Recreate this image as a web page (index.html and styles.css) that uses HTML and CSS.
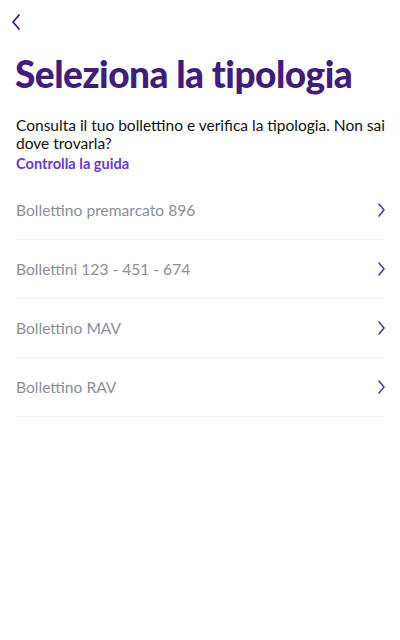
FILE: index.html
```html
<!DOCTYPE html>
<html lang="it">
<head>
  <meta charset="UTF-8" />
  <meta name="viewport" content="width=device-width, initial-scale=1.0" />
  <title>Seleziona la tipologia</title>
  <link rel="stylesheet" href="styles.css">
</head>
<body>
  <header class="topbar">
    <a class="back" href="#">
      <svg width="12" height="18" viewBox="0 0 12 18"><path d="M9 2 L3 9 L9 16" fill="none" stroke="#3d1a78" stroke-width="1.8" stroke-linecap="round" stroke-linejoin="round"/></svg>
    </a>
  </header>

  <main class="content">
    <h1 class="title">Seleziona la tipologia</h1>
    <p class="intro">Consulta il tuo bollettino e verifica la tipologia. Non sai dove trovarla?</p>
    <a class="guide" href="#">Controlla la guida</a>

    <ul class="types">
      <li class="type">
        <span>Bollettino premarcato 896</span>
        <svg class="chev" width="10" height="16" viewBox="0 0 10 16"><path d="M3 2 L8 8 L3 14" fill="none" stroke="#4b3b8f" stroke-width="1.5" stroke-linecap="round" stroke-linejoin="round"/></svg>
      </li>
      <li class="type">
        <span>Bollettini 123 - 451 - 674</span>
        <svg class="chev" width="10" height="16" viewBox="0 0 10 16"><path d="M3 2 L8 8 L3 14" fill="none" stroke="#4b3b8f" stroke-width="1.5" stroke-linecap="round" stroke-linejoin="round"/></svg>
      </li>
      <li class="type">
        <span>Bollettino MAV</span>
        <svg class="chev" width="10" height="16" viewBox="0 0 10 16"><path d="M3 2 L8 8 L3 14" fill="none" stroke="#4b3b8f" stroke-width="1.5" stroke-linecap="round" stroke-linejoin="round"/></svg>
      </li>
      <li class="type">
        <span>Bollettino RAV</span>
        <svg class="chev" width="10" height="16" viewBox="0 0 10 16"><path d="M3 2 L8 8 L3 14" fill="none" stroke="#4b3b8f" stroke-width="1.5" stroke-linecap="round" stroke-linejoin="round"/></svg>
      </li>
    </ul>
  </main>
</body>
</html>
```

FILE: styles.css
```css
body, html {
  margin: 0;
  padding: 0;
  background: #fff;
  font-family: Lato, 'Noto Sans', sans-serif;
  color: #111;
}

.topbar {
  height: 44px;
  padding: 0 10px;
  display: flex;
  align-items: center;
}

.back {
  display: flex;
}

.content {
  padding: 0 16px;
}

.title {
  margin: 8px 0 0 -1px;
  font-size: 37px;
  font-weight: 900;
  color: #3f1c7e;
  letter-spacing: -0.5px;
  line-height: 44px;
}

.intro {
  margin: 20px -12px 0 0;
  font-size: 15.5px;
  line-height: 18px;
  color: #111;
}

.guide {
  display: block;
  margin-top: 2px;
  font-size: 14.6px;
  line-height: 19px;
  font-weight: bold;
  color: #6a38d6;
  text-decoration: none;
}

.types {
  list-style: none;
  margin: 8px 0 0;
  padding: 0;
}

.type {
  height: 58px;
  display: flex;
  align-items: center;
  justify-content: space-between;
  border-bottom: 1px solid #f4f4f6;
  font-size: 15.6px;
  color: #8e8e99;
}

.chev {
  margin-right: -2px;
}
```
